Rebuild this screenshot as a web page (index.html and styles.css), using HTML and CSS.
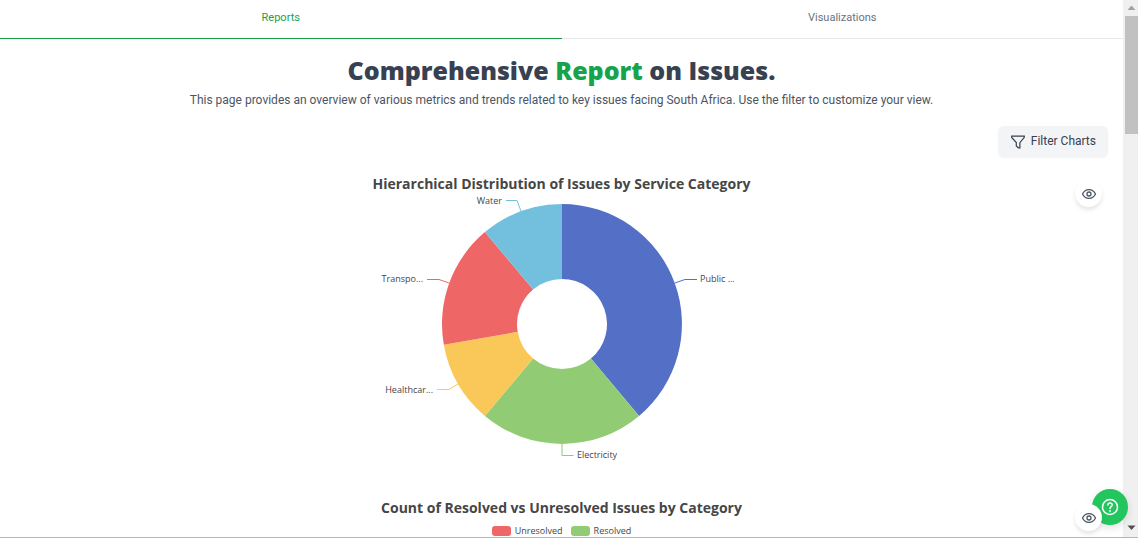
FILE: index.html
```html
<!DOCTYPE html>
<html lang="en">
<head>
<meta charset="utf-8">
<title>Comprehensive Report on Issues</title>
<link rel="stylesheet" href="styles.css">
</head>
<body>
<div class="app">
  <div class="page">
    <nav class="tabs" role="tablist">
      <button class="tab tab-active" role="tab" aria-selected="true">Reports</button>
      <button class="tab" role="tab" aria-selected="false">Visualizations</button>
    </nav>
    <main class="content">
      <header class="intro">
        <h1 class="headline">Comprehensive <span class="accent">Report</span> on Issues.</h1>
        <p class="lead">This page provides an overview of various metrics and trends related to key issues facing South Africa. Use the filter to customize your view.</p>
      </header>
      <div class="toolbar">
        <button class="filter">
          <svg class="filter-icon" viewBox="0 0 16 16" aria-hidden="true"><path d="M1.700 2.200h12.600v1.200L9.900 8.600v5.200H8.400L6.300 12V8.600L1.700 3.400z"/></svg>
          Filter Charts
        </button>
      </div>
      <section class="chart">
        <h2 class="chart-title">Hierarchical Distribution of Issues by Service Category</h2>
        <svg class="donut" viewBox="0 0 400 280" role="img" aria-label="Issues by service category">
          <path class="blue" d="M200 10A120 120 0 0 1 277.1 221.9L228.9 164.5A45 45 0 0 0 200 85z"/>
          <path class="green" d="M277.1 221.9A120 120 0 0 1 122.9 221.9L171.1 164.5A45 45 0 0 0 228.9 164.5z"/>
          <path class="yellow" d="M122.9 221.9A120 120 0 0 1 81.8 150.8L155.7 137.8A45 45 0 0 0 171.1 164.5z"/>
          <path class="red" d="M81.8 150.8A120 120 0 0 1 122.9 38.1L171.1 95.5A45 45 0 0 0 155.7 137.8z"/>
          <path class="cyan" d="M122.9 38.1A120 120 0 0 1 200 10L200 85A45 45 0 0 0 171.1 95.5z"/>
          <path class="lead-line line-blue" d="M312.8 89L323 85.500H335"/>
          <path class="lead-line line-green" d="M200 250V261.500H211.500"/>
          <path class="lead-line line-yellow" d="M96 190L87 195.500H75"/>
          <path class="lead-line line-red" d="M87.200 89L77 85.500H65"/>
          <path class="lead-line line-cyan" d="M159 17.200L155 6.500H144"/>
          <text class="label" x="338" y="88">Public ...</text>
          <text class="label" x="215" y="264">Electricity</text>
          <text class="label label-end" x="71" y="199">Healthcar...</text>
          <text class="label label-end" x="61" y="88">Transpo...</text>
          <text class="label label-end" x="140" y="10">Water</text>
        </svg>
        <button class="view" aria-label="Toggle distribution chart">
          <svg class="eye" viewBox="0 0 16 16" aria-hidden="true"><path d="M1.500 8C4.300 2.200 11.700 2.200 14.500 8C11.700 13.800 4.300 13.800 1.500 8z"/><circle cx="8" cy="8" r="2"/></svg>
        </button>
      </section>
      <section class="chart">
        <h2 class="chart-title">Count of Resolved vs Unresolved Issues by Category</h2>
        <ul class="legend">
          <li class="legend-item"><span class="swatch swatch-red"></span>Unresolved</li>
          <li class="legend-item"><span class="swatch swatch-green"></span>Resolved</li>
        </ul>
        <button class="view" aria-label="Toggle resolution chart">
          <svg class="eye" viewBox="0 0 16 16" aria-hidden="true"><path d="M1.500 8C4.300 2.200 11.700 2.200 14.500 8C11.700 13.800 4.300 13.800 1.500 8z"/><circle cx="8" cy="8" r="2"/></svg>
        </button>
      </section>
    </main>
  </div>
  <div class="scrollbar" aria-hidden="true">
    <svg class="arrow arrow-up" viewBox="0 0 15 16"><path d="M4.500 10L8.500 5.500L12.500 10z"/></svg>
    <div class="thumb"></div>
    <svg class="arrow arrow-down" viewBox="0 0 15 16"><path d="M4.500 4.500L8.500 9L12.500 4.500z"/></svg>
  </div>
  <button class="help" aria-label="Help">
    <svg class="help-icon" viewBox="0 0 20 20" aria-hidden="true"><circle cx="10" cy="10" r="7.500"/><path d="M7.900 7.900C8 5.300 12.300 5.400 12.200 8C12.100 9.600 10 9.700 10 11.600M10 13.400V14.400"/></svg>
  </button>
</div>
</body>
</html>
```

FILE: styles.css
```css
* { box-sizing: border-box; }
body {
  margin: 0;
  font-family: "Open Sans", "Noto Sans", sans-serif;
  color: #374151;
  background: #fff;
}
button { border: 0; padding: 0; font: inherit; color: inherit; cursor: pointer; }
.app {
  position: relative;
  display: flex;
  height: 100vh;
  overflow: hidden;
  border-bottom: 1px solid #b5b5bd;
}
.page { flex: 1; min-width: 0; overflow: hidden; }
.tabs { display: flex; }
.tab {
  flex: 1;
  padding: 10px 0 12px;
  border-bottom: 1px solid #e5e7eb;
  background: none;
  color: #6b7280;
  font-family: Roboto, sans-serif;
  font-size: 11px;
  line-height: 16px;
}
.tab-active { border-color: #16a34a; color: #16a34a; }
.content { padding: 15px; }
.intro { text-align: center; }
.headline { margin: 0; font-size: 25px; font-weight: 800; line-height: 32px; }
.accent { color: #16a34a; }
.lead {
  margin: 5px 0 0;
  color: #4b5563;
  font-family: Roboto, sans-serif;
  font-size: 12px;
  line-height: 18px;
}
.toolbar { display: flex; justify-content: flex-end; margin: 17px 0 16px; }
.filter {
  display: flex;
  align-items: center;
  gap: 5px;
  padding: 6px 12px;
  border-radius: 6px;
  background: #f3f4f6;
  font-family: Roboto, sans-serif;
  font-size: 12px;
  line-height: 19px;
  box-shadow: 0 1px 2px rgba(0, 0, 0, 0.05);
}
.filter-icon { width: 16px; height: 16px; fill: none; stroke: #374151; stroke-width: 1.2; }
.chart { position: relative; margin-bottom: 23px; text-align: center; }
.chart-title { margin: 0; color: #464646; font-size: 14px; font-weight: 700; line-height: 21px; }
.donut { display: block; width: 400px; height: 280px; margin: 0 auto; overflow: visible; }
.blue { fill: #5470c6; }
.green { fill: #91cc75; }
.yellow { fill: #fac858; }
.red { fill: #ee6666; }
.cyan { fill: #73c0de; }
.lead-line { fill: none; stroke-width: 1; }
.line-blue { stroke: #5470c6; }
.line-green { stroke: #91cc75; }
.line-yellow { stroke: #fac858; }
.line-red { stroke: #ee6666; }
.line-cyan { stroke: #73c0de; }
.label { fill: #464646; font-size: 9px; }
.label-end { text-anchor: end; }
.view {
  position: absolute;
  z-index: 1;
  top: 7px;
  right: 6px;
  display: grid;
  place-items: center;
  width: 27px;
  height: 27px;
  border-radius: 50%;
  background: #fff;
  box-shadow: 0 3px 4px rgba(0, 0, 0, 0.1);
}
.eye { width: 16px; height: 16px; fill: none; stroke: #4b5563; stroke-width: 1.3; }
.legend {
  display: flex;
  justify-content: center;
  gap: 8px;
  margin: 4px 0 0;
  padding: 0;
  list-style: none;
  color: #464646;
  font-size: 9px;
  line-height: 18px;
}
.legend-item { display: flex; align-items: center; gap: 4px; }
.swatch { width: 19px; height: 10px; border-radius: 3px; }
.swatch-red { background: #ee6666; }
.swatch-green { background: #91cc75; }
.scrollbar { display: flex; flex-direction: column; width: 15px; background: #f0f0f0; }
.thumb { height: 118px; margin-left: 2px; background: #c1c1c1; }
.arrow { width: 15px; height: 16px; }
.arrow-up { fill: #a3a3a3; }
.arrow-down { margin-top: auto; fill: #505050; }
.help {
  position: absolute;
  right: 10px;
  bottom: 12px;
  display: grid;
  place-items: center;
  width: 36px;
  height: 36px;
  border-radius: 50%;
  background: #22c55e;
  box-shadow: 0 3px 8px rgba(0, 0, 0, 0.12);
}
.help-icon { width: 20px; height: 20px; fill: none; stroke: #fff; stroke-width: 1.5; stroke-linecap: round; }
```
